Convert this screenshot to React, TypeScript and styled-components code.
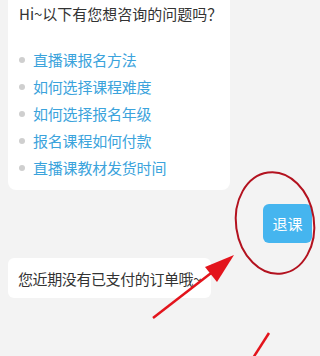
import React from "react";
import styled, { createGlobalStyle } from "styled-components";

const GlobalStyle = createGlobalStyle`
  html, body {
    margin: 0;
    padding: 0;
    background: #f3f3f3;
  }
  body {
    font-family: "Noto Sans CJK SC", "Noto Sans", sans-serif;
  }
`

const Page = styled.div`
  position: relative;
  width: 320px;
  height: 356px;
  overflow: hidden;
  display: flex;
  flex-direction: column;
  padding: 0 8px;
  box-sizing: border-box;
`

const QuestionCard = styled.div`
  margin-top: -8px;
  width: 222px;
  box-sizing: border-box;
  background: #fff;
  border-radius: 8px;
  padding: 12px 0 9px 11px;
`

const Title = styled.div`
  font-size: 15px;
  line-height: 20px;
  color: #333;
  white-space: nowrap;
`

const QuestionList = styled.ul`
  list-style: none;
  margin: 22px 0 0 0;
  padding: 0;
`

const QuestionItem = styled.li`
  display: flex;
  align-items: center;
  height: 27px;
  font-size: 15px;
  color: #3ba3dc;
  white-space: nowrap;
  letter-spacing: -0.2px;

  &::before {
    content: "";
    width: 6px;
    height: 6px;
    border-radius: 50%;
    background: #cfcfcf;
    margin: 0 8px 0 0;
  }
`

const RightRow = styled.div`
  display: flex;
  justify-content: flex-end;
  margin-top: 14px;
`

const ActionButton = styled.div`
  width: 49px;
  height: 39px;
  border-radius: 6px;
  background: #45b5ef;
  color: #fff;
  font-size: 15px;
  display: flex;
  align-items: center;
  justify-content: center;
`

const ReplyCard = styled.div`
  align-self: flex-start;
  margin-top: 15px;
  height: 40px;
  display: flex;
  align-items: center;
  padding: 0 10px;
  background: #fff;
  border-radius: 6px;
  font-size: 15px;
  color: #333;
  white-space: nowrap;
  letter-spacing: -0.4px;
`

const Markup = styled.svg`
  position: absolute;
  left: 0;
  top: 0;
  pointer-events: none;
`

const questions = [
  "直播课报名方法",
  "如何选择课程难度",
  "如何选择报名年级",
  "报名课程如何付款",
  "直播课教材发货时间",
]

const App = () => {
  return (
    <>
      <GlobalStyle/>
      <Page>
        <QuestionCard>
          <Title>Hi~以下有您想咨询的问题吗？</Title>
          <QuestionList>
            {questions.map(q => (
              <QuestionItem key={q}>{q}</QuestionItem>
            ))}
          </QuestionList>
        </QuestionCard>
        <RightRow>
          <ActionButton>退课</ActionButton>
        </RightRow>
        <ReplyCard>您近期没有已支付的订单哦~</ReplyCard>

        <Markup width="320" height="356" viewBox="0 0 320 356">
          <ellipse cx="275" cy="223" rx="39" ry="51" fill="none" stroke="#b3121f" strokeWidth="2" transform="rotate(-8 275 223)"/>
          <line x1="153" y1="318" x2="215" y2="270" stroke="#e3141c" strokeWidth="2.5"/>
          <polygon points="234,255 205,267 217,282" fill="#e3141c"/>
          <line x1="269" y1="333" x2="253" y2="358" stroke="#e3141c" strokeWidth="2.5"/>
        </Markup>
      </Page>
    </>
  )
}

export default App
